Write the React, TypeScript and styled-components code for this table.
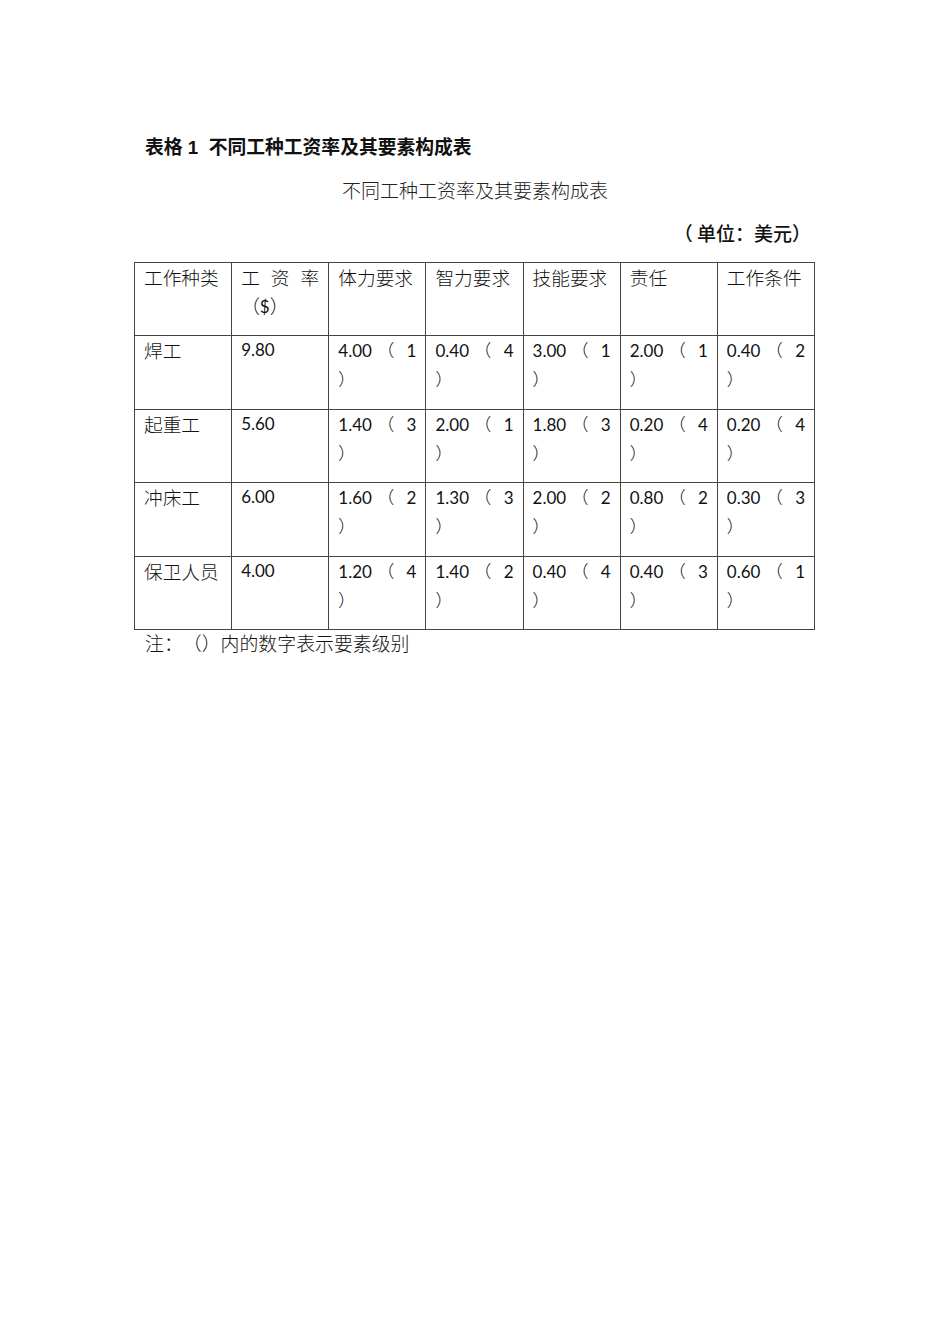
import React from 'react';
import styled, { createGlobalStyle } from 'styled-components';

const GlobalStyle = createGlobalStyle`
  html, body {
    margin: 0;
    padding: 0;
    background: #ffffff;
  }
  body {
    font-family: "Noto Sans CJK SC", sans-serif;
    color: #111;
    text-spacing-trim: space-all;
  }
`;

const cjk = `"Noto Sans CJK SC", sans-serif`;
const latin = `Lato, "Noto Sans CJK SC", sans-serif`;

const Page = styled.div`
  width: 950px;
  height: 1344px;
  box-sizing: border-box;
  padding: 136px 145px 0 145px;
  display: flex;
  flex-direction: column;
`;

const Caption = styled.div`
  font-family: "Liberation Sans", "Noto Sans CJK SC", sans-serif;
  font-weight: 700;
  font-size: 18.8px;
  line-height: 24px;
  color: #111;
`;

const TableTitle = styled.div`
  margin-top: 18px;
  text-align: center;
  font-family: ${cjk};
  font-weight: 300;
  font-size: 19px;
  line-height: 24px;
  color: #222;
`;

const Unit = styled.div`
  margin-top: 19px;
  margin-right: -6px;
  text-align: right;
  font-family: ${cjk};
  font-weight: 500;
  font-size: 19px;
  line-height: 24px;
  white-space: pre;
`;

const Table = styled.table`
  margin-top: 17px;
  margin-left: -11px;
  width: 681px;
  border-collapse: collapse;
  table-layout: fixed;
`;

const Row = styled.tr`
  height: 73.4px;
`;

const Cell = styled.td<{ $latin?: boolean }>`
  border: 1px solid #444;
  vertical-align: top;
  padding: 0 9px 0 9px;
  font-family: ${({ $latin }) => ($latin ? latin : cjk)};
  font-weight: ${({ $latin }) => ($latin ? 400 : 300)};
  font-size: ${({ $latin }) => ($latin ? '17px' : '18.7px')};
  line-height: 28px;
  color: #111;
`;

const Line = styled.div`
  display: flex;
  justify-content: space-between;
  align-items: baseline;
`;

const Paren = styled.span<{ $open?: boolean }>`
  font-family: ${cjk};
  font-weight: 300;
  font-size: 17px;
  margin-right: ${({ $open }) => ($open ? '7px' : '0')};
`;

const Dollar = styled.span`
  font-family: ${latin};
  font-weight: 400;
  font-size: 17px;
`;

const Note = styled.div`
  margin-top: 1px;
  font-family: ${cjk};
  font-weight: 300;
  font-size: 18.9px;
  line-height: 24px;
`;

const headers = ['工作种类', null, '体力要求', '智力要求', '技能要求', '责任', '工作条件'];

const rows: { name: string; rate: string; items: [string, string][] }[] = [
  { name: '焊工', rate: '9.80', items: [['4.00', '1'], ['0.40', '4'], ['3.00', '1'], ['2.00', '1'], ['0.40', '2']] },
  { name: '起重工', rate: '5.60', items: [['1.40', '3'], ['2.00', '1'], ['1.80', '3'], ['0.20', '4'], ['0.20', '4']] },
  { name: '冲床工', rate: '6.00', items: [['1.60', '2'], ['1.30', '3'], ['2.00', '2'], ['0.80', '2'], ['0.30', '3']] },
  { name: '保卫人员', rate: '4.00', items: [['1.20', '4'], ['1.40', '2'], ['0.40', '4'], ['0.40', '3'], ['0.60', '1']] },
];

const App: React.FC = () => (
  <>
    <GlobalStyle />
    <Page>
      <Caption>表格 1&nbsp; 不同工种工资率及其要素构成表</Caption>
      <TableTitle>不同工种工资率及其要素构成表</TableTitle>
      <Unit>（ 单位：美元）</Unit>
      <Table>
        <tbody>
          <Row>
            {headers.map((h, i) =>
              h === null ? (
                <Cell key={i}>
                  <Line>
                    <span>工</span>
                    <span>资</span>
                    <span>率</span>
                  </Line>
                  <div>
                    （<Dollar>$</Dollar>）
                  </div>
                </Cell>
              ) : (
                <Cell key={i}>{h}</Cell>
              )
            )}
          </Row>
          {rows.map(r => (
            <Row key={r.name}>
              <Cell>{r.name}</Cell>
              <Cell $latin>{r.rate}</Cell>
              {r.items.map(([v, lvl], i) => (
                <Cell $latin key={i}>
                  <Line>
                    <span>{v}</span>
                    <Paren $open>（</Paren>
                    <span>{lvl}</span>
                  </Line>
                  <div>
                    <Paren>）</Paren>
                  </div>
                </Cell>
              ))}
            </Row>
          ))}
        </tbody>
      </Table>
      <Note>注：（）内的数字表示要素级别</Note>
    </Page>
  </>
);

export default App;
